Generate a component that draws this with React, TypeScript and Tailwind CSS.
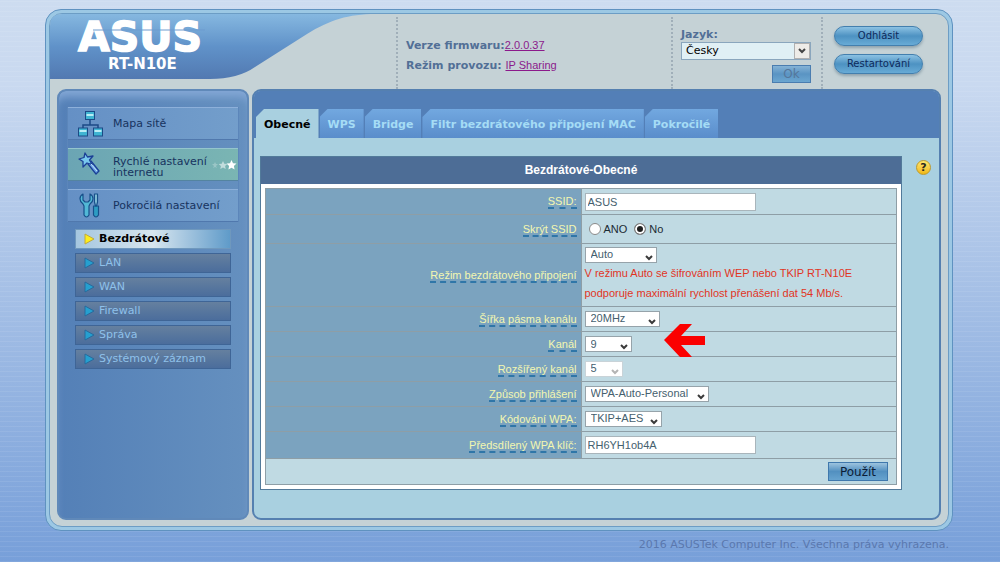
import type { ReactNode } from "react";
import clsx from "clsx";

const tabs = ["Obecné", "WPS", "Bridge", "Filtr bezdrátového připojení MAC", "Pokročilé"];
const subItems = ["Bezdrátové", "LAN", "WAN", "Firewall", "Správa", "Systémový záznam"];

function NetworkIcon() {
  return (
    <svg width="28" height="28" viewBox="0 0 28 28" stroke="#1c4a86">
      <path d="M13 10v5M6 19v-4h15v4" fill="none" strokeWidth="1.5" />
      <rect x="8.5" y="1.5" width="9" height="8" fill="#3fb4d2" />
      <rect x="1.5" y="18" width="9" height="8" fill="#3fb4d2" />
      <rect x="16.5" y="18" width="9" height="8" fill="#3fb4d2" />
      <path d="M9.500 5h7M2.500 21h7M17.500 21h7" stroke="#b9ecf5" strokeWidth="2" />
    </svg>
  );
}

function WandIcon() {
  return (
    <svg width="28" height="28" viewBox="0 0 28 28" stroke="#1b3f96" strokeLinejoin="round">
      <path d="M11 13l3-3 8 10-3 3z" fill="#6da5e6" strokeWidth="1.3" />
      <path d="M8 2l2.500 4 5.500-1-3.500 4 2.500 4.500-5-1.500-4 4v-5.500L2 8l5-1.500z" fill="#79c8ee" strokeWidth="1.3" />
      <path d="M14 13l6 7" stroke="#c4e4fb" />
    </svg>
  );
}

function ToolsIcon() {
  return (
    <svg width="28" height="28" viewBox="0 0 28 28" stroke="#17508a" strokeLinejoin="round" strokeWidth="1.2">
      <path
        d="M6 2C2 4 2 9 6 12l1 2v9q2.500 4 5 0v-9l1-2c4-3 4-8 0-10v6l-2 2h-3l-2-2z"
        fill="#52b8d6"
      />
      <path d="M16.500 14h5v9q-2.500 4-5 0z" fill="#2d9cc2" />
      <path d="M17.500 2h3v8l-1 4h-1l-1-4z" fill="#8bc6dc" />
    </svg>
  );
}

function Stars() {
  return (
    <svg width="26" height="12" viewBox="0 0 26 12" fill="#fff" aria-hidden="true">
      <path d="M4 3l1 2h2l-2 2 1 2-2-1-2 1 1-2-2-2h2z" opacity=".25" />
      <path d="M12 2l1.300 2.700 3 .3-2.200 2 .6 3-2.700-1.500L9.300 10l.6-3-2.200-2 3-.3z" opacity=".55" />
      <path d="M20.500 1l1.500 3.200 3.500.4-2.600 2.400.7 3.500-3.100-1.800-3.100 1.800.7-3.500-2.600-2.400 3.500-.4z" />
    </svg>
  );
}

function Chevron({ className }: { className?: string }) {
  return (
    <svg width="8" height="6" viewBox="0 0 8 6" className={className} aria-hidden="true">
      <path d="M1 1l3 3 3-3" fill="none" stroke="currentColor" strokeWidth="2" />
    </svg>
  );
}

function Select({ id, value, width, disabled }: { id: string; value: string; width: string; disabled?: boolean }) {
  return (
    <span className={clsx("relative inline-block h-4 align-top", width)}>
      <select
        id={id}
        disabled={disabled}
        className={clsx(
          "block h-4 w-full appearance-none border bg-white pl-[5px] leading-[13px]",
          disabled ? "border-[#c9d3d8]" : "border-[#96a3aa]"
        )}
      >
        <option>{value}</option>
      </select>
      <Chevron
        className={clsx(
          "pointer-events-none absolute right-1 bottom-0.5",
          disabled ? "text-[#b4b4b4]" : "text-[#3a3a3a]"
        )}
      />
    </span>
  );
}

function Row({ id, label, height, children }: { id?: string; label: string; height: string; children: ReactNode }) {
  return (
    <tr className={height}>
      <th className="w-1/2 border border-[#8e9ea6] bg-[#7ba3bf] pr-1 text-right font-normal text-[#f3f7b0]">
        <label htmlFor={id} className="border-b-2 border-dashed border-[#2f76a8]">
          {label}
        </label>
      </th>
      <td className="border border-[#8e9ea6] pl-[3px] text-left text-[#45606e]">{children}</td>
    </tr>
  );
}

function MenuLink({ icon, children, active }: { icon: ReactNode; children: ReactNode; active?: boolean }) {
  return (
    <a
      href="#"
      className={clsx(
        "flex h-[33px] items-center gap-2 border-t border-b pl-[9px] text-[11px] leading-[11px] text-[#17335f]",
        active
          ? "border-t-[#94c5cd] border-b-[#5484a0] bg-linear-to-r from-[#6ba5b4] to-[#7ab5b3]"
          : "border-t-[#8db0da] border-b-[#5078ad] bg-linear-to-r from-[#6590c5] to-[#739ecb]"
      )}
    >
      {icon}
      {children}
    </a>
  );
}

function Header() {
  return (
    <header className="relative flex h-[75px] text-[#526f96]">
      <svg width="326" height="65" viewBox="0 0 326 65" className="absolute top-0 left-0" aria-hidden="true">
        <defs>
          <linearGradient id="wave" x1="0" y1="0" x2="0" y2="1">
            <stop offset="0" stopColor="#86b8e0" />
            <stop offset=".5" stopColor="#6092c9" />
            <stop offset="1" stopColor="#5279b1" />
          </linearGradient>
        </defs>
        <path
          d="M0 65V12Q0 0 12 0H326C298 0 280 6 257 20L205 53Q188 65 160 65z"
          fill="url(#wave)"
        />
      </svg>
      <div className="relative flex w-[346px] shrink-0 flex-col pt-0.5 pl-[27px] text-white">
        <svg width="134" height="38" viewBox="0 0 134 38" className="overflow-visible" role="img" aria-label="ASUS">
          <text x="1" y="35" fill="#fff" stroke="#fff" strokeWidth="1.5" fontSize="41" fontWeight="700" fontFamily="DejaVu Sans">
            ASUS
          </text>
          <path d="M16 14h112" stroke="#6c9bcf" strokeWidth="1" />
        </svg>
        <h1 className="pt-0.5 pl-[31px] text-[15px] leading-4 font-bold">RT-N10E</h1>
      </div>
      <div className="mt-[3px] flex flex-1 flex-col gap-[3px] border-l-2 border-dotted border-[#a0afb9] pt-5 pl-2 text-[11px] leading-4 font-bold">
        <p>
          Verze firmwaru:
          <a href="#" className="font-['Liberation_Sans',sans-serif] font-normal text-[#8b1a8b] underline">2.0.0.37</a>
        </p>
        <p>
          Režim provozu:{" "}
          <a href="#" className="font-['Liberation_Sans',sans-serif] font-normal text-[#8b1a8b] underline">IP Sharing</a>
        </p>
      </div>
      <div className="mt-[3px] flex w-[150px] flex-col border-l-2 border-dotted border-[#a0afb9] pt-2.5 pl-2 text-[11px]">
        <label htmlFor="lang" className="leading-[15px] font-bold">Jazyk:</label>
        <span className="relative">
          <select id="lang" className="block h-[18px] w-[130px] appearance-none border border-[#8aa6bd] bg-[#e0f0f5] pl-1 leading-4 text-black">
            <option>Česky</option>
          </select>
          <span className="pointer-events-none absolute top-px left-[113px] grid h-4 w-4 place-items-center border border-[#b0b0b0] bg-[#eeece8] text-[#444]">
            <Chevron />
          </span>
        </span>
        <button className="mt-[5px] ml-[91px] h-[18px] w-[39px] border border-[#4a7db0] bg-linear-to-b from-[#85b3d6] via-[#5a94c3] to-[#6ba6d0] text-xs leading-4 text-[#55779b]">
          Ok
        </button>
      </div>
      <div className="mt-[3px] flex w-[127px] flex-col gap-2 border-l-2 border-dotted border-[#a0afb9] pt-[9px] pl-[11px]">
        {["Odhlásit", "Restartování"].map((label) => (
          <button
            key={label}
            className="h-5 w-[89px] rounded-full border border-[#437fae] bg-linear-to-b from-[#8cc2e3] via-[#4d92c2] to-[#68abd6] text-[10px] leading-4 text-[#0d2a5c] shadow-[0_2px_3px_#8fa3ad]"
          >
            {label}
          </button>
        ))}
      </div>
    </header>
  );
}

function Sidebar() {
  return (
    <aside className="w-[192px] shrink-0 rounded-[9px] border-2 border-[#6089b9] bg-linear-to-r from-[#5480b7] to-[#6590bf] px-2 pt-4 shadow-[inset_0_10px_8px_-4px_#83a7d5]">
      <nav>
        <div className="flex flex-col gap-2 border-x border-[#5c86ba]">
          <MenuLink icon={<NetworkIcon />}>Mapa sítě</MenuLink>
          <MenuLink icon={<WandIcon />} active>
            <span className="w-[94px] pt-1 whitespace-nowrap">
              Rychlé nastavení
              <br />
              internetu
            </span>
            <span className="-ml-1">
              <Stars />
            </span>
          </MenuLink>
          <MenuLink icon={<ToolsIcon />}>Pokročilá nastavení</MenuLink>
        </div>
        <ul className="mx-2 mt-[7px] flex flex-col gap-1">
          {subItems.map((item, i) => (
            <li key={item}>
              <a
                href="#"
                className={clsx(
                  "flex h-5 items-center gap-1 border pl-2 text-[11px]",
                  i === 0
                    ? "border-[#6f98bd] bg-linear-to-r from-[#a5c6df] via-[#d8e6ef] to-[#5f9bc9] font-bold text-black"
                    : "border-[#3f6596] bg-linear-to-b from-[#65809f] to-[#4b6d9c] text-[#8fc1ea]"
                )}
              >
                <svg width="11" height="12" viewBox="0 0 11 12" aria-hidden="true">
                  <path
                    d="M1 1l9 5-9 5z"
                    fill={i === 0 ? "#ffee1c" : "#25a0d0"}
                    stroke={i === 0 ? "#c0a93c" : "#286a9c"}
                  />
                </svg>
                {item}
              </a>
            </li>
          ))}
        </ul>
      </nav>
    </aside>
  );
}

function Settings() {
  return (
    <section className="flex-1 border border-[#527a9a] bg-white font-['Liberation_Sans',sans-serif] text-[11px]">
      <h2 className="h-[27px] bg-[#4d6d96] text-center text-xs leading-[27px] font-bold text-white">
        Bezdrátové-Obecné
      </h2>
      <div className="p-1">
        <table className="w-full border-collapse border border-[#8e9ea6] bg-[#c0dae3]">
          <tbody>
            <Row id="ssid" label="SSID:" height="h-[26px]">
              <input id="ssid" defaultValue="ASUS" className="block h-[18px] w-[171px] border border-[#a9b5bb] bg-white px-0.5" />
            </Row>
            <Row label="Skrýt SSID" height="h-[29px]">
              <div className="flex items-center gap-[7px] pl-1 text-[#1c2a33]">
                {["ANO", "No"].map((option) => (
                  <label key={option} className="flex items-center gap-[3px]">
                    <input
                      type="radio"
                      name="hide"
                      defaultChecked={option === "No"}
                      className="size-3 appearance-none rounded-full border border-[#8a8a8a] bg-white checked:bg-[#1e1e1e] checked:shadow-[inset_0_0_0_2px_#fff]"
                    />
                    {option}
                  </label>
                ))}
              </div>
            </Row>
            <Row id="mode" label="Režim bezdrátového připojení" height="h-[63px]">
              <Select id="mode" value="Auto" width="w-[72px]" />
              <p className="leading-5 text-[#e0351f]">
                V režimu Auto se šifrováním WEP nebo TKIP RT-N10E
                <br />
                podporuje maximální rychlost přenášení dat 54 Mb/s.
              </p>
            </Row>
            <Row id="width" label="Šířka pásma kanálu" height="h-[25px]">
              <Select id="width" value="20MHz" width="w-[75px]" />
            </Row>
            <Row id="channel" label="Kanál" height="h-[25px]">
              <div className="flex items-center gap-8">
                <Select id="channel" value="9" width="w-[47px]" />
                <svg width="41" height="33" viewBox="0 0 41 33" className="relative -my-3 -top-1" aria-hidden="true">
                  <path d="M0 16L16 0h12L17 12h24v9H17l11 12H16z" fill="#fb0000" />
                </svg>
              </div>
            </Row>
            <Row id="ext" label="Rozšířený kanál" height="h-[25px]">
              <Select id="ext" value="5" width="w-[38px]" disabled />
            </Row>
            <Row id="auth" label="Způsob přihlášení" height="h-[25px]">
              <Select id="auth" value="WPA-Auto-Personal" width="w-[124px]" />
            </Row>
            <Row id="crypto" label="Kódování WPA:" height="h-[25px]">
              <Select id="crypto" value="TKIP+AES" width="w-[77px]" />
            </Row>
            <Row id="psk" label="Předsdílený WPA klíč:" height="h-[27px]">
              <input id="psk" defaultValue="RH6YH1ob4A" className="block h-[18px] w-[171px] border border-[#a9b5bb] bg-white px-0.5" />
            </Row>
            <tr className="h-[26px]">
              <td colSpan={2} className="border border-[#8e9ea6] pr-2">
                <button className="ml-auto block h-[19px] w-[60px] border border-[#3f78ad] bg-linear-to-b from-[#9cc3de] via-[#5290c0] to-[#67a3cf] font-['DejaVu_Sans',sans-serif] text-xs leading-4 text-[#0c1d36]">
                  Použít
                </button>
              </td>
            </tr>
          </tbody>
        </table>
      </div>
    </section>
  );
}

export default function App() {
  return (
    <div className="min-h-screen bg-[repeating-linear-gradient(0deg,#ffffff14_0_1px,transparent_1px_5px),linear-gradient(#cddcf0,#c9d9f0_15%,#779fd9)] pt-[9px] pr-[47px] pl-[45px] font-['DejaVu_Sans',sans-serif]">
      <div className="rounded-[16px] border border-[#5f92c0] bg-[#9cc8e4] p-[3px]">
        <div className="rounded-[13px] border border-[#6c9dc5] bg-[#c5d2d6] pb-1.5">
          <Header />
          <div className="flex gap-[3px] px-[7px]">
            <Sidebar />
            <main className="flex-1 rounded-[9px] border-2 border-[#5580b0] bg-[#a9d0e0] pb-7">
              <div className="flex h-[47px] items-end gap-px rounded-t-[6px] bg-[#537fb7] pl-0.5">
                {tabs.map((tab, i) => (
                  <a
                    key={tab}
                    href="#"
                    className={clsx(
                      "h-[29px] px-2 text-[11px] leading-[32px] font-bold [clip-path:polygon(8px_0,100%_0,100%_100%,0_100%,0_8px)]",
                      i === 0
                        ? "bg-[#a9d0e0] text-black"
                        : "bg-linear-to-b from-[#72a8e0] to-[#5a8dcb] text-[#a5dcf5]"
                    )}
                  >
                    {tab}
                  </a>
                ))}
              </div>
              <div className="flex items-start pt-[18px] pl-1.5">
                <Settings />
                <button
                  aria-label="Nápověda"
                  className="mt-1 mr-2 ml-3.5 size-[15px] shrink-0 rounded-full border border-[#bd9a2c] bg-linear-to-b from-[#ffe66a] to-[#f0b80c] text-[11px] leading-3 font-bold text-[#2a2a20]"
                >
                  ?
                </button>
              </div>
            </main>
          </div>
        </div>
      </div>
      <footer className="py-1.5 pr-1 text-right text-[11px] leading-4 text-[#5a78ae]">
        2016 ASUSTek Computer Inc. Všechna práva vyhrazena.
      </footer>
    </div>
  );
}
